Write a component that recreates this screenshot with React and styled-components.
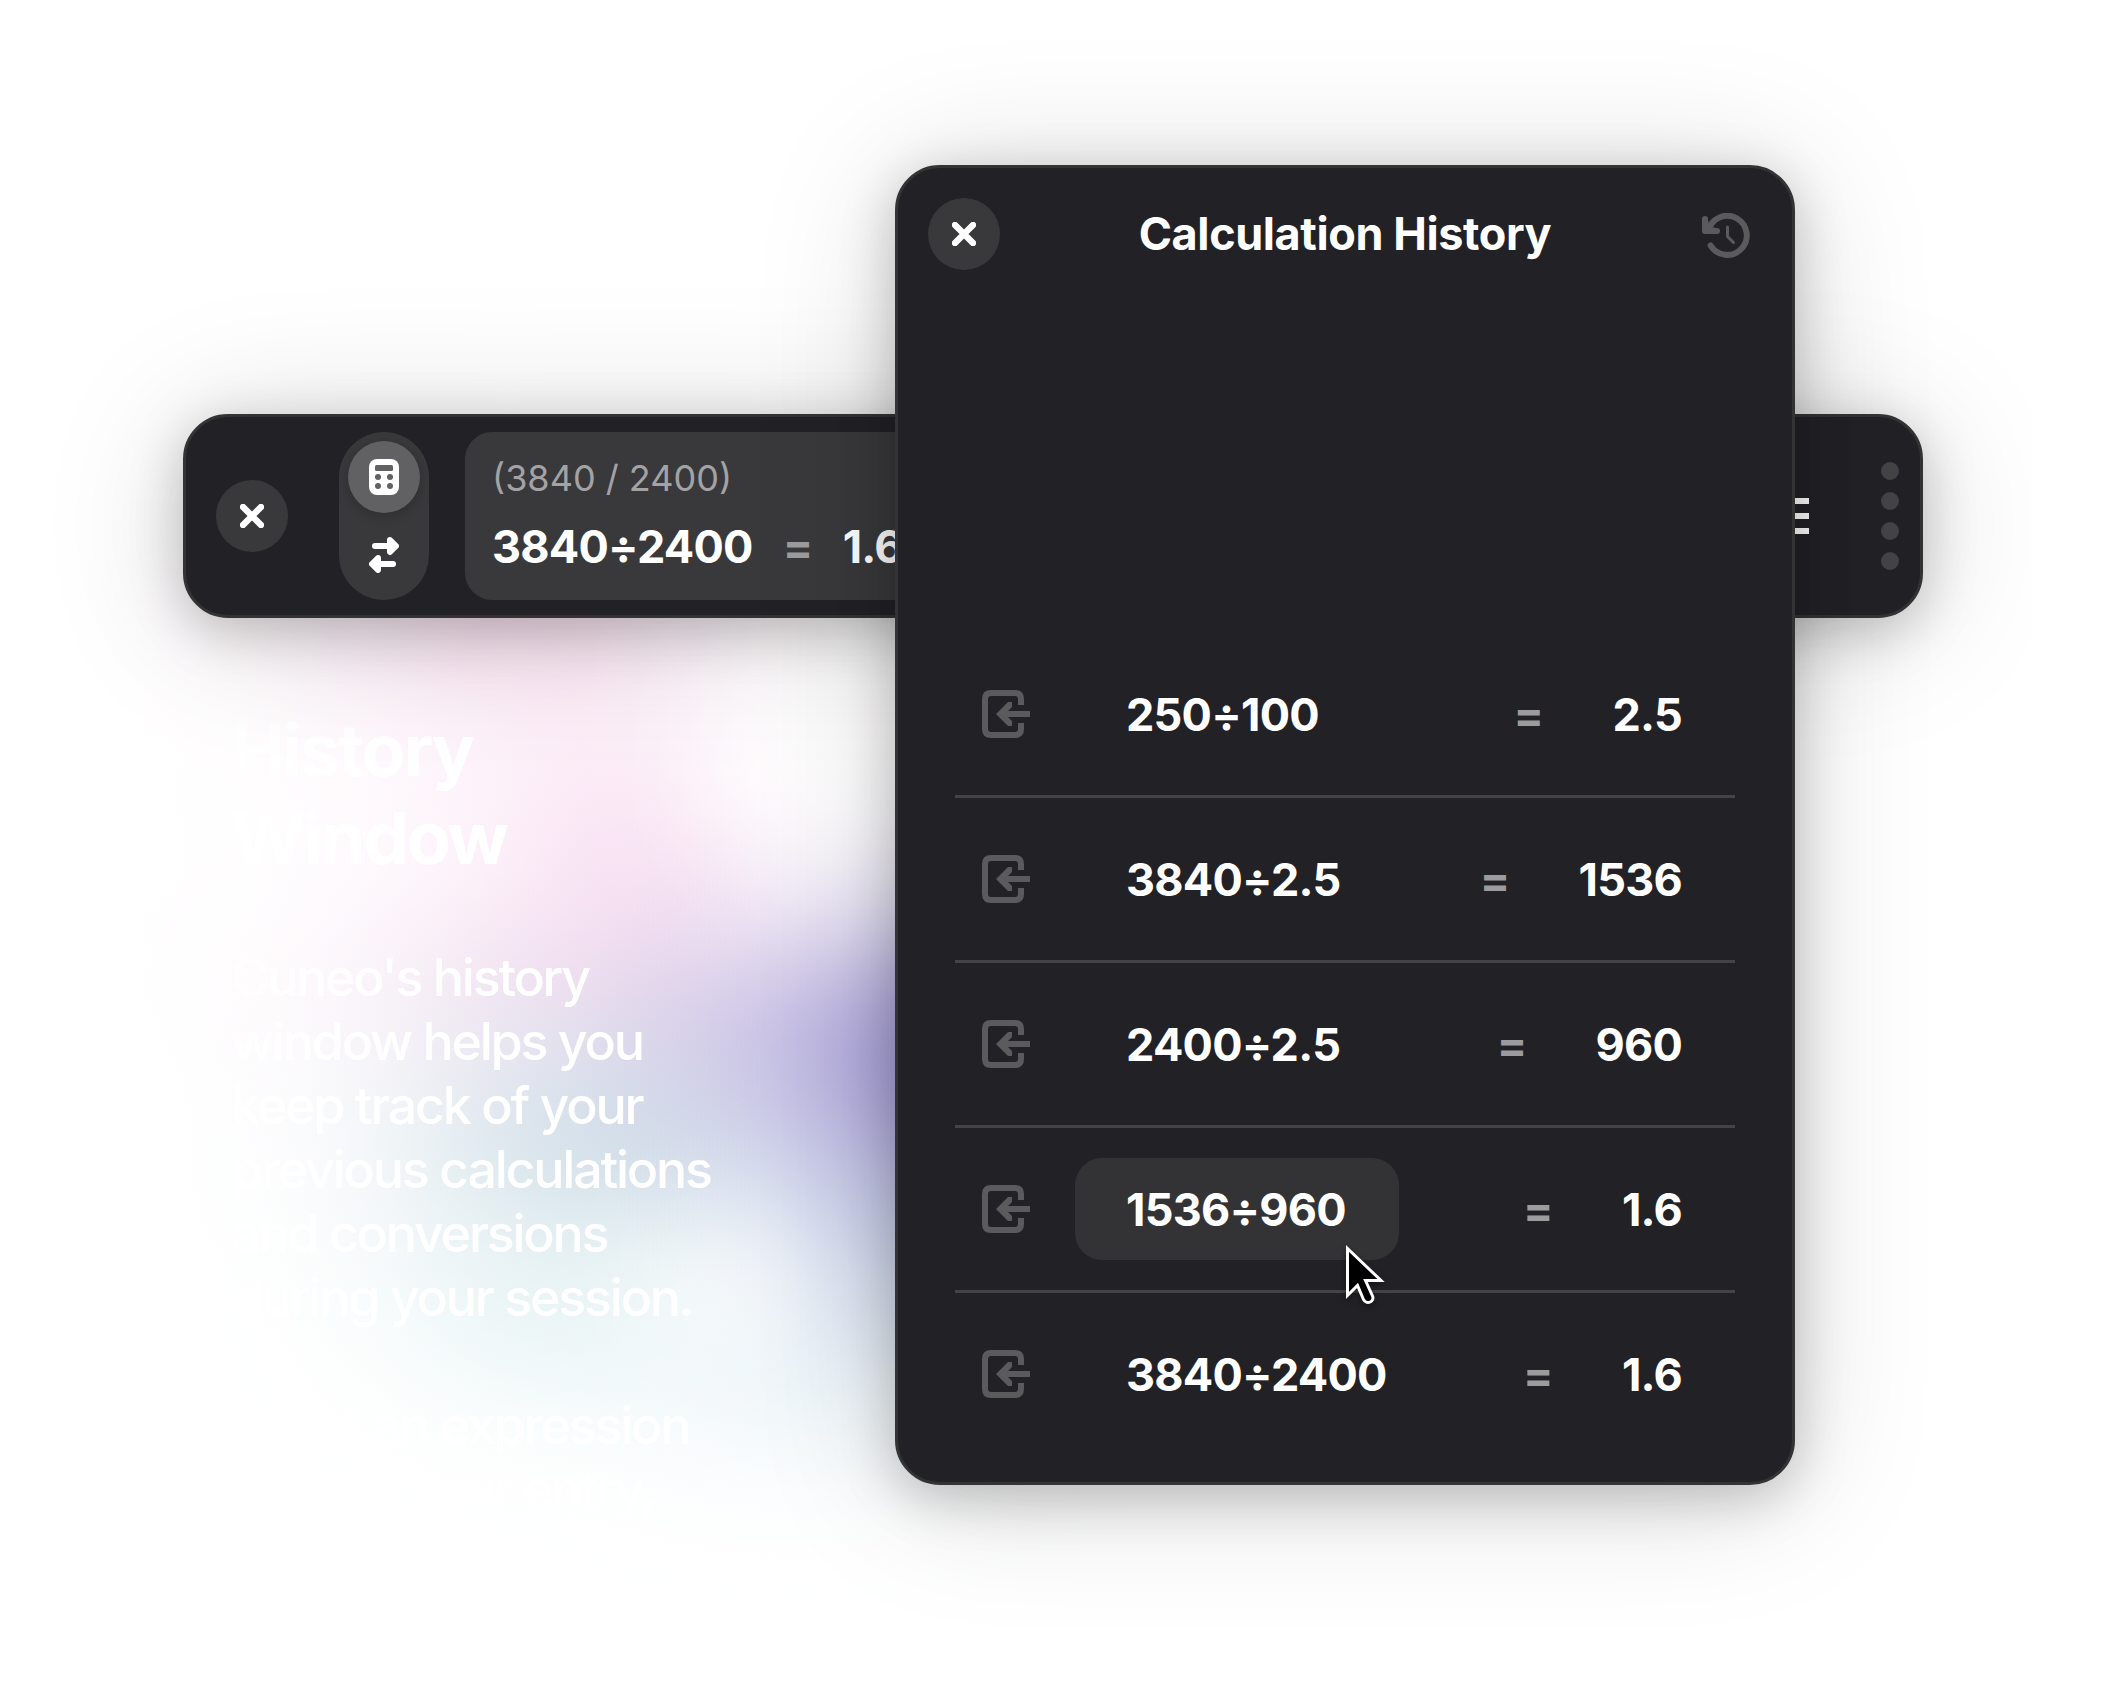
import React from "react";
import styled, { createGlobalStyle, css } from "styled-components";

const Global = createGlobalStyle`
  *, *::before, *::after { box-sizing: border-box; }
  html, body { margin: 0; padding: 0; background: #fff; }
  body { font-family: Inter, "Liberation Sans", sans-serif; }
  button { font: inherit; color: inherit; letter-spacing: inherit; border: 0; padding: 0; background: none; }
  svg { display: block; flex: none; }
  h1, h2, p { margin: 0; }
`;

const Desktop = styled.main`
  position: relative;
  width: 2106px;
  height: 1693px;
  overflow: hidden;
  background: #fff;
`;

/* A radial gradient whose alpha falls off like a bell curve. */
const blob = (x, y, sx, sy, rgb, alpha) => {
  const stops = [];
  for (let i = 0; i <= 12; i += 1) {
    const r = (i / 12) * 3;
    const a = i === 12 ? 0 : alpha * Math.exp((-r * r) / 2);
    stops.push(`rgba(${rgb}, ${a.toFixed(4)}) ${((i / 12) * 100).toFixed(2)}%`);
  }
  return `radial-gradient(${sx * 3}px ${sy * 3}px at ${x}px ${y - 500}px, ${stops.join(", ")})`;
};

const glowLayers = [
  blob(815, 735, 90, 95, "255, 255, 255", 0.65),
  blob(725, 1290, 70, 60, "255, 255, 255", 0.4),
  blob(960, 1060, 130, 110, "128, 116, 200", 0.68),
  blob(760, 1040, 120, 80, "184, 174, 220", 0.32),
  blob(890, 1240, 90, 90, "185, 202, 230", 0.45),
  blob(540, 1310, 110, 75, "220, 240, 240", 0.4),
  blob(600, 1150, 145, 95, "196, 216, 226", 0.66),
  blob(640, 870, 95, 105, "244, 208, 235", 0.5),
  blob(560, 990, 150, 75, "240, 212, 235", 0.42),
  blob(520, 590, 150, 85, "245, 200, 228", 0.45),
  blob(520, 790, 140, 180, "253, 232, 247", 0.36),
  blob(800, 1370, 140, 80, "236, 245, 249", 0.65),
].join(", ");

const Glow = styled.div`
  position: absolute;
  inset: 500px 0 0 0;
  background: ${glowLayers};
`;

const Intro = styled.section`
  position: absolute;
  left: 231px;
  top: 706px;
  width: 560px;
  color: #fff;
`;

const IntroTitle = styled.h1`
  font-size: 72px;
  line-height: 88px;
  font-weight: 700;
  letter-spacing: -2.2px;
  width: 300px;
`;

const IntroText = styled.p`
  margin-top: ${(p) => p.$gap}px;
  font-size: 52px;
  line-height: 64px;
  font-weight: 500;
  letter-spacing: -2.25px;
  white-space: nowrap;
`;

const windowSurface = css`
  position: absolute;
  background: #222126;
  border: 3px solid #333334;
  border-radius: 45px;
  box-shadow: 0 12px 54px rgba(0, 0, 0, 0.22), 0 9px 144px rgba(0, 0, 0, 0.15);
`;

const Toolbar = styled.section`
  ${windowSurface}
  left: 183px;
  top: 414px;
  width: 1740px;
  height: 204px;
  display: flex;
  align-items: center;
  padding: 0 21px 0 30px;
`;

const CloseButton = styled.button`
  width: 72px;
  height: 72px;
  flex: none;
  border-radius: 50%;
  background: #39393b;
  display: grid;
  place-items: center;
`;

const ModeSwitch = styled.div`
  margin-left: 51px;
  width: 90px;
  height: 168px;
  flex: none;
  padding: 9px 9px;
  border-radius: 45px;
  background: #39393b;
  display: flex;
  flex-direction: column;
  align-items: center;
  gap: 6px;
`;

const ModeButton = styled.button`
  width: 72px;
  height: 72px;
  border-radius: 50%;
  display: grid;
  place-items: center;
  ${(p) => p.$active && css`
    background: #616163;
    box-shadow: 0 3px 12px rgba(0, 0, 0, 0.22);
  `}
`;

const Display = styled.div`
  margin-left: 36px;
  width: 1200px;
  height: 168px;
  flex: none;
  padding: 24px 27px;
  border-radius: 27px;
  background: #39393b;
`;

const Parsed = styled.div`
  font-size: 36px;
  line-height: 44px;
  color: #a3a3a5;
`;

const Entry = styled.div`
  margin-top: 20px;
  display: flex;
  font-size: 45px;
  line-height: 54px;
  font-weight: 700;
  letter-spacing: -0.75px;
  color: #fff;
`;

const Equals = styled.span`
  color: #9c9c9e;
  font-weight: 700;
  width: 90px;
  text-align: center;
`;

const MenuButton = styled.button`
  margin-left: 108px;
  display: flex;
  flex-direction: column;
  gap: 9px;
`;

const MenuBar = styled.span`
  width: 36px;
  height: 6px;
  background: #fff;
`;

const Grip = styled.div`
  margin-left: auto;
  display: flex;
  flex-direction: column;
  gap: 12px;
`;

const GripDot = styled.span`
  width: 18px;
  height: 18px;
  border-radius: 50%;
  background: #444446;
`;

const HistoryWindow = styled.section`
  ${windowSurface}
  left: 895px;
  top: 165px;
  width: 900px;
  height: 1320px;
  display: flex;
  flex-direction: column;
  justify-content: space-between;
  padding: 30px 57px 24px;
`;

const Header = styled.header`
  display: flex;
  align-items: center;
  justify-content: space-between;
  margin: 0 -27px;
`;

const Title = styled.h2`
  font-size: 45px;
  line-height: 54px;
  font-weight: 700;
  letter-spacing: -0.4px;
  color: #fff;
`;

const ClearButton = styled.button`
  width: 72px;
  height: 72px;
  display: grid;
  place-items: center;
  padding-top: 3px;
`;

const List = styled.ul`
  list-style: none;
  margin: 0;
  padding: 0;
`;

const Row = styled.li`
  height: 165px;
  display: flex;
  align-items: center;
  padding: 0 26px 0 27px;
  font-size: 45px;
  font-weight: 700;
  letter-spacing: -0.75px;
  color: #fff;
  border-bottom: 3px solid #444446;
  &:last-child { border-bottom-color: transparent; }
`;

const Expression = styled.button`
  margin-left: 45px;
  height: 102px;
  padding: 0 53px 0 51px;
  border-radius: 27px;
  background: ${(p) => (p.$hovered ? "#333335" : "transparent")};
`;

const RowEquals = styled(Equals)`
  margin-left: auto;
  width: auto;
`;

const Result = styled.span`
  margin-left: 69px;
  margin-right: 27px;
`;

const Pointer = styled.svg`
  position: absolute;
  left: 1336px;
  top: 1236px;
  filter: drop-shadow(0 3px 3px rgba(0, 0, 0, 0.4));
`;

const CloseIcon = () => (
  <svg width="24" height="24" viewBox="0 0 24 24">
    <path d="M3 3L21 21M21 3L3 21" stroke="#fff" strokeWidth="6.4" strokeLinecap="round" />
  </svg>
);

const CalculatorIcon = () => (
  <svg width="30" height="36" viewBox="0 0 30 36">
    <rect width="30" height="36" rx="8" fill="#fff" />
    <g fill="#616163">
      <rect x="6" y="6" width="18" height="6" rx="1.5" />
      <circle cx="9" cy="18" r="3" /><circle cx="21" cy="18" r="3" />
      <circle cx="9" cy="27" r="3" /><circle cx="21" cy="27" r="3" />
    </g>
  </svg>
);

const SwapIcon = () => (
  <svg width="30" height="36" viewBox="0 0 30 36" fill="#fff" stroke="#fff" strokeLinejoin="round" strokeLinecap="round">
    <path d="M6 9H20M24 27H10" strokeWidth="6" />
    <path d="M21 3L27 9L21 15ZM9 21L3 27L9 33Z" strokeWidth="6" />
  </svg>
);

const HistoryIcon = () => (
  <svg width="48" height="46" viewBox="0 0 48 46" fill="none" stroke="#5b5b5d" strokeLinecap="round" strokeLinejoin="round">
    <path d="M6.5 17A19.5 19.5 0 1 1 8.6 32.5" strokeWidth="6" />
    <path d="M3 6V18H15" strokeWidth="6" />
    <path d="M3 6V18H15Z" strokeWidth="1" />
    <path d="M25.500 14V23.500L31.500 29.500" strokeWidth="3" />
  </svg>
);

const InsertIcon = () => (
  <svg width="48" height="48" viewBox="0 0 48 48" fill="none" stroke="#5b5b5d">
    <path d="M39 15V9Q39 3 33 3H9Q3 3 3 9V39Q3 45 9 45H33Q39 45 39 39V33" strokeWidth="6" />
    <path d="M18 24H48" strokeWidth="6" />
    <path d="M14 24L26 12H30V17L23 24L30 31V36H26Z" fill="#5b5b5d" stroke="none" />
  </svg>
);

const HISTORY = [
  { expression: "250÷100", result: "2.5" },
  { expression: "3840÷2.5", result: "1536" },
  { expression: "2400÷2.5", result: "960" },
  { expression: "1536÷960", result: "1.6", hovered: true },
  { expression: "3840÷2400", result: "1.6" },
];

export default function App() {
  return (
    <>
      <Global />
      <Desktop>
        <Glow />
        <Intro>
          <IntroTitle>History Window</IntroTitle>
          <IntroText $gap={64}>Cuneo's history<br />window helps you<br />keep track of your<br />previous calculations<br />and conversions<br />during your session.</IntroText>
          <IntroText $gap={64}>Insert an expression<br />to build your entry,</IntroText>
        </Intro>
        <Toolbar>
          <CloseButton aria-label="Close calculator"><CloseIcon /></CloseButton>
          <ModeSwitch>
            <ModeButton $active aria-label="Calculator"><CalculatorIcon /></ModeButton>
            <ModeButton aria-label="Converter"><SwapIcon /></ModeButton>
          </ModeSwitch>
          <Display>
            <Parsed>(3840 / 2400)</Parsed>
            <Entry><span>3840÷2400</span><Equals>=</Equals><span>1.6</span></Entry>
          </Display>
          <MenuButton aria-label="Menu"><MenuBar /><MenuBar /><MenuBar /></MenuButton>
          <Grip><GripDot /><GripDot /><GripDot /><GripDot /></Grip>
        </Toolbar>
        <HistoryWindow>
          <Header>
            <CloseButton aria-label="Close history"><CloseIcon /></CloseButton>
            <Title>Calculation History</Title>
            <ClearButton aria-label="Clear history"><HistoryIcon /></ClearButton>
          </Header>
          <List>
            {HISTORY.map((item) => (
              <Row key={item.expression}>
                <InsertIcon />
                <Expression $hovered={item.hovered}>{item.expression}</Expression>
                <RowEquals>=</RowEquals>
                <Result>{item.result}</Result>
              </Row>
            ))}
          </List>
        </HistoryWindow>
        <Pointer width="60" height="80" viewBox="0 0 60 80">
          <path d="M11.500 12.500L45 44.500H29.500L36.500 60C39 66 30 69 27.500 63.500L21.500 49.500L11.500 59.500Z" fill="#000" stroke="#fff" strokeWidth="3" />
        </Pointer>
      </Desktop>
    </>
  );
}
